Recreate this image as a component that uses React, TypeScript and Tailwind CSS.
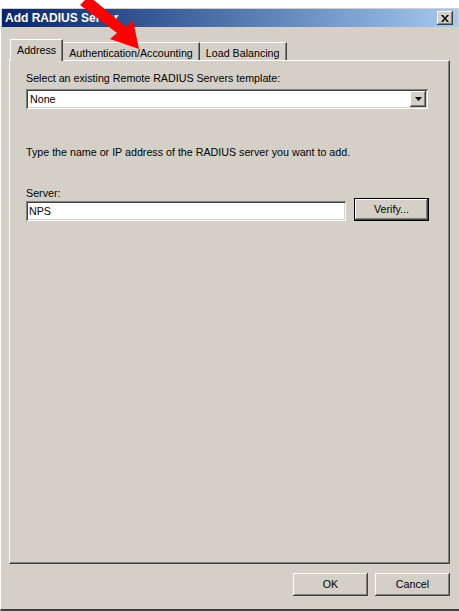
import React from 'react'

const font = { fontFamily: '"Liberation Sans", Arial, sans-serif' }

const raised =
  'shadow-[inset_-1px_-1px_#404040,inset_1px_1px_#ffffff,inset_-2px_-2px_#808080,inset_2px_2px_#d4d0c8]'
const sunken =
  'shadow-[inset_1px_1px_#808080,inset_-1px_-1px_#ffffff,inset_2px_2px_#404040,inset_-2px_-2px_#d4d0c8]'

function Btn({ label, strong }: { label: string; strong?: boolean }) {
  return (
    <button
      className={`flex h-[23px] w-[75px] items-center justify-center bg-[#d4d0c8] text-[10.7px] text-black ${
        strong ? 'border border-black' : ''
      } ${raised}`}
    >
      {label}
    </button>
  )
}

export default function App() {
  return (
    <div className="h-[611px] w-[459px] overflow-hidden bg-white pt-[8px] text-[10.7px] text-black" style={font}>
      <div className="relative flex h-[603px] w-[459px] flex-col border-b-2 border-l border-b-[#404040] border-l-[#ffffff] bg-[#d4d0c8] shadow-[inset_1px_0_#d4d0c8]">
        {/* title bar */}
        <div className="mx-[1px] mt-[1px] flex h-[18px] items-center justify-between bg-gradient-to-r from-[#0a246a] to-[#a6caf0] pl-[3px] pr-[5px]">
          <span className="text-[12px] font-bold text-white">Add RADIUS Server</span>
          <div className={`flex h-[14px] w-[16px] items-center justify-center bg-[#d4d0c8] ${raised}`}>
            <svg width="8" height="7" viewBox="0 0 8 7">
              <path d="M0 0h2l2 2.5L6 0h2L5 3.5 8 7H6L4 4.5 2 7H0l3-3.5z" fill="#000" />
            </svg>
          </div>
        </div>

        {/* tabs */}
        <div className="ml-[9px] mt-[12px] flex h-[21px] items-end">
          <div className="relative z-10 -mb-[1px] flex h-[22px] items-start border-l border-r border-t border-l-white border-r-[#404040] border-t-white bg-[#d4d0c8] px-[6px] pt-[2px] shadow-[inset_-1px_0_#808080]">
            Address
          </div>
          <div className="flex h-[18px] items-start border-r border-t border-r-[#404040] border-t-white px-[6px] pt-[2px] shadow-[inset_-1px_0_#808080]">
            Authentication/Accounting
          </div>
          <div className="flex h-[18px] items-start border-r border-t border-r-[#404040] border-t-white px-[6px] pt-[2px] shadow-[inset_-1px_0_#808080]">
            Load Balancing
          </div>
        </div>

        {/* tab panel */}
        <div className="ml-[8px] mr-[9px] flex h-[504px] flex-col border-b border-l border-r border-t border-b-[#404040] border-l-white border-r-[#404040] border-t-white px-[16px] pt-[11px] shadow-[inset_-1px_-1px_#808080]">
          <div className="leading-[13px]">Select an existing Remote RADIUS Servers template:</div>
          <div className={`mt-[4px] flex h-[20px] w-[402px] items-center justify-between bg-white pl-[4px] pr-[2px] ${sunken}`}>
            <span>None</span>
            <div className={`flex h-[16px] w-[16px] items-center justify-center bg-[#d4d0c8] ${raised}`}>
              <svg width="7" height="4" viewBox="0 0 7 4">
                <path d="M0 0h7L3.5 4z" fill="#000" />
              </svg>
            </div>
          </div>

          <div className="mt-[37px] leading-[13px]">Type the name or IP address of the RADIUS server you want to add.</div>

          <div className="mt-[28px] leading-[13px]">Server:</div>
          <div className="-mt-[2px] flex items-start gap-[8px]">
            <div className={`mt-[3px] flex h-[20px] w-[320px] items-center bg-white pl-[3px] ${sunken}`}>NPS</div>
            <Btn label="Verify..." strong />
          </div>
        </div>

        {/* footer */}
        <div className="mr-[9px] mt-[9px] flex justify-end gap-[7px]">
          <Btn label="OK" />
          <Btn label="Cancel" />
        </div>

        {/* red annotation arrow */}
        <svg className="pointer-events-none absolute left-0 top-[-8px]" width="200" height="70" viewBox="0 0 200 70">
          <polygon points="79,5 88,-4 125,27 132,20 138,49 109,39 116,33" fill="#ff0000" />
        </svg>
      </div>
    </div>
  )
}
